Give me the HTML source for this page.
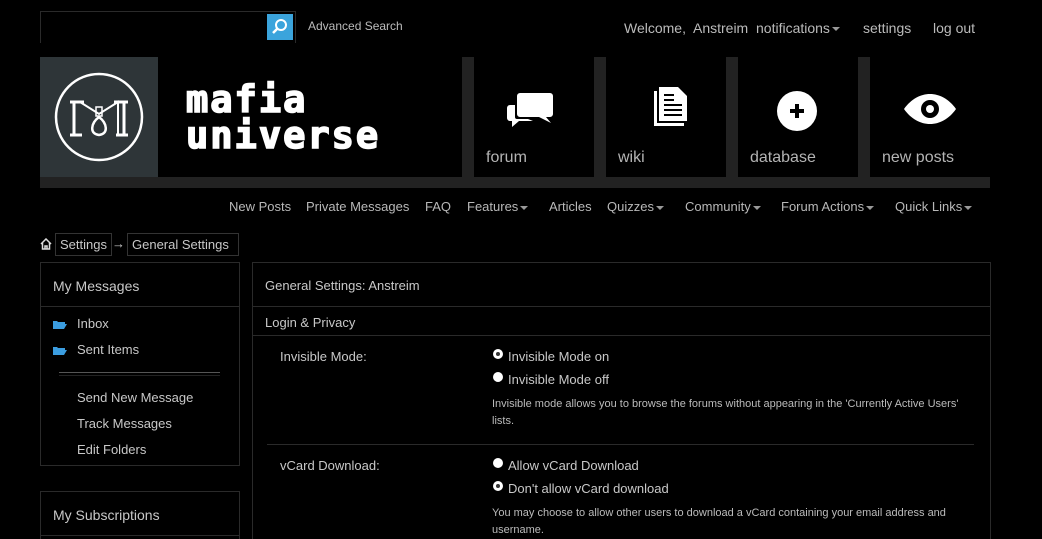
<!DOCTYPE html>
<html style="overflow:hidden;height:539px"><head><style>
body{margin:0;background:#000;width:1042px;height:539px;overflow:hidden;position:relative;font-family:"Liberation Sans",sans-serif;color:#c8c8c8}
.a{position:absolute;white-space:nowrap}
.t{font-size:13px}
.tile{position:absolute;top:57px;width:120px;height:120px;background:#000}
.tile span{position:absolute;left:12px;top:92px;font-size:16px;color:#b4b4b4}
.tile svg{position:absolute;left:32px;top:28px}
.box{position:absolute;border:1px solid #2a2a2a}
.tri{display:inline-block;width:0;height:0;border-left:4px solid transparent;border-right:4px solid transparent;border-top:4px solid #999;vertical-align:middle;margin-left:2px}
.r{position:absolute;width:10px;height:10px;border-radius:50%;background:#fff}
.r.on::after{content:"";position:absolute;left:3px;top:3px;width:4px;height:4px;border-radius:50%;background:#333}
</style></head><body>
<div class="a" style="left:40px;top:11px;width:254px;height:31px;border-top:1px solid #2a2a2a;border-left:1px solid #2a2a2a;border-right:1px solid #2a2a2a"></div>
<div class="a" style="left:267px;top:14px;width:26px;height:26px;background:#3ba4dc"><svg width="26" height="26"><circle cx="14" cy="11" r="5" fill="none" stroke="#fff" stroke-width="2"/><line x1="10.5" y1="14.5" x2="6" y2="19" stroke="#fff" stroke-width="2.5"/></svg></div>
<div class="a t" style="left:308px;top:19px;font-size:12px;color:#bbb">Advanced Search</div>
<div class="a" style="left:624px;top:20px;font-size:14px;color:#bbb">Welcome,&nbsp; Anstreim&nbsp; notifications<span class="tri"></span></div>
<div class="a" style="left:863px;top:20px;font-size:14px;color:#bbb">settings</div>
<div class="a" style="left:933px;top:20px;font-size:14px;color:#bbb">log out</div>

<div class="a" style="left:40px;top:57px;width:950px;height:131px;background:#222"></div>
<div class="a" style="left:40px;top:57px;width:422px;height:120px;background:#000"></div>
<div class="a" style="left:40px;top:57px;width:118px;height:120px;background:#2e3538">
<svg width="118" height="120"><circle cx="59" cy="60" r="43" fill="none" stroke="#fff" stroke-width="2.5"/>
<path d="M30 45h14M74 45h14M34 45v32M84 45v32M30 78h12M76 78h12" fill="none" stroke="#fff" stroke-width="3"/>
<path d="M40 45l19 12 19-12v32" fill="none" stroke="#fff" stroke-width="2"/>
<rect x="56" y="50" width="6" height="9" fill="none" stroke="#fff" stroke-width="1.5"/>
<path d="M59 60c-8 6-10 17 0 18c10-1 8-12 0-18z" fill="none" stroke="#fff" stroke-width="2.5"/></svg></div>
<div class="a" style="left:186px;top:82px;font-size:37px;font-weight:bold;color:#fff;line-height:36px;letter-spacing:2px;font-family:'DejaVu Sans Mono',monospace;-webkit-text-stroke:1.6px #fff">mafia<br>universe</div>

<div class="tile" style="left:474px"><svg width="60" height="45"><path d="M14 8h30a3 3 0 0 1 3 3v18a3 3 0 0 1-3 3h-4l5 6-12-6h-19a3 3 0 0 1-3-3v-18a3 3 0 0 1 3-3z" fill="#fff"/><path d="M9 20h-5a3 3 0 0 0-3 3v10a3 3 0 0 0 3 3h2l0 6 7-6h14l-5-2h-11a2 2 0 0 1-2-2z" fill="#fff"/></svg><span>forum</span></div>
<div class="tile" style="left:606px"><svg width="60" height="48" style="left:40px"><path d="M8 6v35h30v-3h-27v-32z" fill="#fff"/><path d="M13 2h19l9 9v25h-28z" fill="#fff"/><path d="M18 10h10M18 15h10M18 20h18M18 25h18M18 30h18" stroke="#000" stroke-width="2"/></svg><span>wiki</span></div>
<div class="tile" style="left:738px"><svg width="60" height="48" style="left:38px"><circle cx="21" cy="26" r="20" fill="#fff"/><path d="M21 19v14M14 26h14" stroke="#000" stroke-width="4"/></svg><span>database</span></div>
<div class="tile" style="left:870px"><svg width="60" height="48" style="left:32px"><path d="M2 24c14-20 38-20 52 0c-14 20-38 20-52 0z" fill="#fff"/><circle cx="28" cy="24" r="9" fill="#000"/><circle cx="28" cy="24" r="4" fill="#fff"/></svg><span>new posts</span></div>

<div class="a t" style="top:199px;left:229px;color:#b8b8b8">New Posts</div>
<div class="a t" style="top:199px;left:306px;color:#b8b8b8">Private Messages</div>
<div class="a t" style="top:199px;left:425px;color:#b8b8b8">FAQ</div>
<div class="a t" style="top:199px;left:467px;color:#b8b8b8">Features<span class="tri"></span></div>
<div class="a t" style="top:199px;left:549px;color:#b8b8b8">Articles</div>
<div class="a t" style="top:199px;left:607px;color:#b8b8b8">Quizzes<span class="tri"></span></div>
<div class="a t" style="top:199px;left:685px;color:#b8b8b8">Community<span class="tri"></span></div>
<div class="a t" style="top:199px;left:781px;color:#b8b8b8">Forum Actions<span class="tri"></span></div>
<div class="a t" style="top:199px;left:895px;color:#b8b8b8">Quick Links<span class="tri"></span></div>

<svg class="a" style="left:40px;top:238px" width="12" height="12"><path d="M1 6l5-5 5 5M2.5 5v6h7v-6M5 11v-3h2v3" fill="none" stroke="#ddd" stroke-width="1.5"/></svg>
<div class="a t" style="left:55px;top:233px;border:1px solid #333;padding:3px 4px;color:#c8c8c8">Settings</div>
<div class="a t" style="left:112px;top:236px">→</div>
<div class="a t" style="left:127px;top:233px;border:1px solid #333;padding:3px 4px;width:102px;color:#c8c8c8">General Settings</div>

<div class="box" style="left:40px;top:262px;width:198px;height:202px"></div>
<div class="a" style="left:41px;top:306px;width:198px;height:1px;background:#2a2a2a"></div>
<div class="a" style="left:53px;top:278px;font-size:14px">My Messages</div>
<svg class="a" style="left:53px;top:319px" width="14" height="10"><path d="M0 2h4l1 1h7v2h-9l-3 5z M3 5h11l-3 5h-11z" fill="#3b9de0"/></svg>
<svg class="a" style="left:53px;top:345px" width="14" height="10"><path d="M0 2h4l1 1h7v2h-9l-3 5z M3 5h11l-3 5h-11z" fill="#3b9de0"/></svg>
<div class="a t" style="left:77px;top:316px">Inbox</div>
<div class="a t" style="left:77px;top:342px">Sent Items</div>
<div class="a" style="left:59px;top:372px;width:161px;height:2px;border-top:1px solid #555;border-bottom:1px solid #222"></div>
<div class="a t" style="left:77px;top:390px">Send New Message</div>
<div class="a t" style="left:77px;top:416px">Track Messages</div>
<div class="a t" style="left:77px;top:442px">Edit Folders</div>

<div class="a" style="left:40px;top:491px;width:198px;height:48px;border:1px solid #2a2a2a;border-bottom:none"></div>
<div class="a" style="left:41px;top:535px;width:198px;height:1px;background:#2a2a2a"></div>
<div class="a" style="left:53px;top:507px;font-size:14px">My Subscriptions</div>

<div class="a" style="left:252px;top:262px;width:737px;height:277px;border:1px solid #2a2a2a;border-bottom:none"></div>
<div class="a" style="left:253px;top:306px;width:737px;height:1px;background:#2a2a2a"></div>
<div class="a" style="left:253px;top:335px;width:737px;height:1px;background:#2a2a2a"></div>
<div class="a" style="left:265px;top:278px;font-size:13px">General Settings: Anstreim</div>
<div class="a t" style="left:265px;top:315px">Login &amp; Privacy</div>
<div class="a t" style="left:280px;top:349px">Invisible Mode:</div>
<div class="r on" style="left:493px;top:349px"></div><div class="a t" style="left:508px;top:349px">Invisible Mode on</div>
<div class="r" style="left:493px;top:372px"></div><div class="a t" style="left:508px;top:372px">Invisible Mode off</div>
<div class="a" style="left:492px;top:396px;font-size:11px;line-height:17px;color:#bbb">Invisible mode allows you to browse the forums without appearing in the 'Currently Active Users'<br>lists.</div>
<div class="a" style="left:267px;top:444px;width:707px;height:1px;background:#2a2a2a"></div>
<div class="a t" style="left:280px;top:458px">vCard Download:</div>
<div class="r" style="left:493px;top:458px"></div><div class="a t" style="left:508px;top:458px">Allow vCard Download</div>
<div class="r on" style="left:493px;top:481px"></div><div class="a t" style="left:508px;top:481px">Don't allow vCard download</div>
<div class="a" style="left:492px;top:505px;font-size:11px;line-height:17px;color:#bbb">You may choose to allow other users to download a vCard containing your email address and<br>username.</div>
</body></html>
